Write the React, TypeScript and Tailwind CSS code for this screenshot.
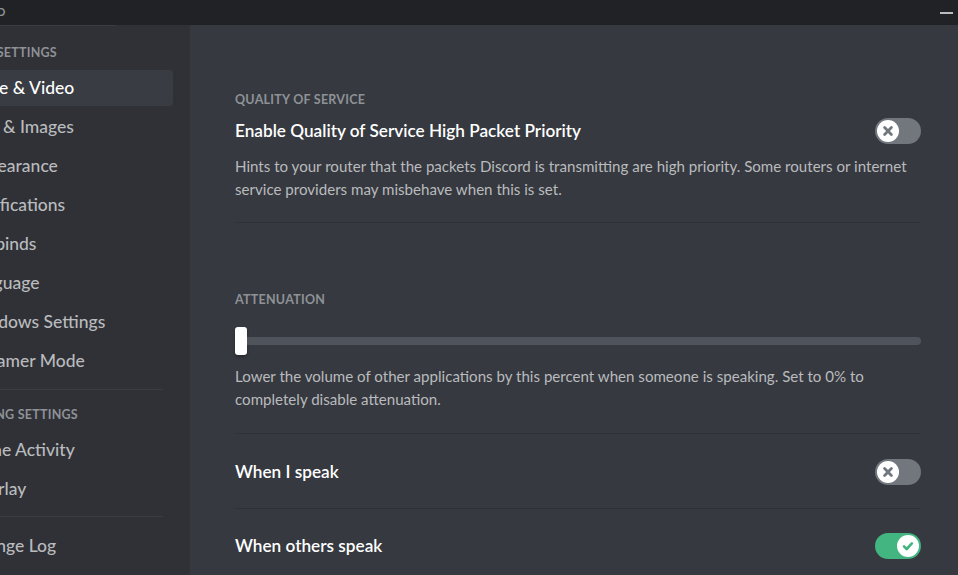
import React from "react";

const font = { fontFamily: "Lato, 'Noto Sans', sans-serif" };

type NavItem = { label: string; selected?: boolean };

const userSettings: NavItem[] = [
  { label: "Voice & Video", selected: true },
  { label: "Text & Images" },
  { label: "Appearance" },
  { label: "Notifications" },
  { label: "Keybinds" },
  { label: "Language" },
  { label: "Windows Settings" },
  { label: "Streamer Mode" },
];

const gamingSettings: NavItem[] = [{ label: "Game Activity" }, { label: "Overlay" }];

function SideItem({ label, selected }: NavItem) {
  return (
    <div
      className={
        "flex h-[36px] items-center rounded-[4px] pl-[12px] mb-[3px] text-[17.5px] font-medium whitespace-nowrap " +
        (selected ? "bg-[#393c43] text-white" : "text-[#b9bbbe]")
      }
    >
      {label}
    </div>
  );
}

function SideHeader({ label }: { label: string }) {
  return (
    <div className="h-[16px] pl-[7px] text-[12.5px] font-bold uppercase leading-[16px] tracking-[0.02em] text-[#8e9297] whitespace-nowrap">
      {label}
    </div>
  );
}

function Toggle({ on }: { on?: boolean }) {
  return (
    <div
      className={
        "flex h-[26px] w-[46px] shrink-0 items-center rounded-full px-[2px] " +
        (on ? "justify-end bg-[#43b581]" : "justify-start bg-[#72767d]")
      }
    >
      <div className="flex h-[22px] w-[22px] items-center justify-center rounded-full bg-white">
        {on ? (
          <svg width="14" height="14" viewBox="0 0 14 14" fill="none">
            <path d="M3 7.3l2.7 2.7 5.2-5.6" stroke="#43b581" strokeWidth="2.6" strokeLinecap="round" strokeLinejoin="round" />
          </svg>
        ) : (
          <svg width="14" height="14" viewBox="0 0 14 14" fill="none">
            <path d="M3.6 3.6l6.8 6.8M10.4 3.6l-6.8 6.8" stroke="#72767d" strokeWidth="2.8" strokeLinecap="round" />
          </svg>
        )}
      </div>
    </div>
  );
}

function SectionHeader({ label }: { label: string }) {
  return (
    <div className="h-[16px] text-[12.5px] font-bold uppercase leading-[16px] tracking-[0.02em] text-[#8e9297]">
      {label}
    </div>
  );
}

function Divider() {
  return <div className="h-px w-full bg-[#2f3136]" />;
}

export default function App() {
  return (
    <div className="flex h-[575px] w-[958px] flex-col overflow-hidden bg-[#36393f]" style={font}>
      {/* title bar */}
      <div className="flex h-[25px] shrink-0 items-center justify-between bg-[#202225]">
        <div className="flex w-[6px] justify-end whitespace-nowrap text-[11px] font-bold tracking-[0.05em] text-[#8e9297]">
          DISCORD
        </div>
        <div className="mr-[5px] h-[2px] w-[13px] bg-[#b9bbbe]" />
      </div>

      <div className="flex min-h-0 flex-1">
        {/* sidebar */}
        <div className="w-[190px] shrink-0 overflow-hidden bg-[#2f3136]">
          <div className="ml-[-46px] w-[219px]">
            <div className="ml-[46px] h-px w-[116px] bg-[#393c43]" />
            <div className="pt-[19px]">
              <SideHeader label="User Settings" />
            </div>
            <div className="mt-[9px]">
              {userSettings.map((item) => (
                <SideItem key={item.label} {...item} />
              ))}
            </div>
            <div className="mr-[10px] mt-[10px] h-px bg-[#393c43]" />
            <div className="mt-[17px]">
              <SideHeader label="Gaming Settings" />
            </div>
            <div className="mt-[9px]">
              {gamingSettings.map((item) => (
                <SideItem key={item.label} {...item} />
              ))}
            </div>
            <div className="mr-[10px] mt-[9px] h-px bg-[#393c43]" />
            <div className="mt-[11px]">
              <SideItem label="Change Log" />
            </div>
          </div>
        </div>

        {/* main */}
        <div className="flex-1 pl-[45px] pt-[67px]">
          <div className="flex w-[686px] flex-col">
            <SectionHeader label="Quality of Service" />
            <div className="mt-[10px] flex h-[26px] items-center justify-between">
              <span className="text-[17.2px] font-semibold text-white">
                Enable Quality of Service High Packet Priority
              </span>
              <Toggle />
            </div>
            <div className="mt-[11px] text-[15.1px] leading-[23px] text-[#b9bbbe]">
              <div className="whitespace-nowrap">
                Hints to your router that the packets Discord is transmitting are high priority. Some routers or internet
              </div>
              <div className="whitespace-nowrap">service providers may misbehave when this is set.</div>
            </div>
            <div className="mt-[21px]">
              <Divider />
            </div>

            <div className="mt-[69px]">
              <SectionHeader label="Attenuation" />
            </div>
            <div className="mt-[19px] flex h-[28px] items-center">
              <div className="h-[28px] w-[12px] shrink-0 rounded-[3px] bg-white shadow-[0_2px_3px_rgba(0,0,0,0.3)]" />
              <div className="h-[8px] flex-1 rounded-r-[4px] bg-[#4f545c]" />
            </div>
            <div className="mt-[10px] text-[15.1px] leading-[23px] text-[#b9bbbe]">
              <div className="whitespace-nowrap">
                Lower the volume of other applications by this percent when someone is speaking. Set to 0% to
              </div>
              <div className="whitespace-nowrap">completely disable attenuation.</div>
            </div>
            <div className="mt-[22px]">
              <Divider />
            </div>

            <div className="mt-[25px] flex h-[26px] items-center justify-between">
              <span className="text-[17.2px] font-semibold text-white">When I speak</span>
              <Toggle />
            </div>
            <div className="mt-[23px]">
              <Divider />
            </div>
            <div className="mt-[24px] flex h-[26px] items-center justify-between">
              <span className="text-[17.2px] font-semibold text-white">When others speak</span>
              <Toggle on />
            </div>
          </div>
        </div>
      </div>
    </div>
  );
}
